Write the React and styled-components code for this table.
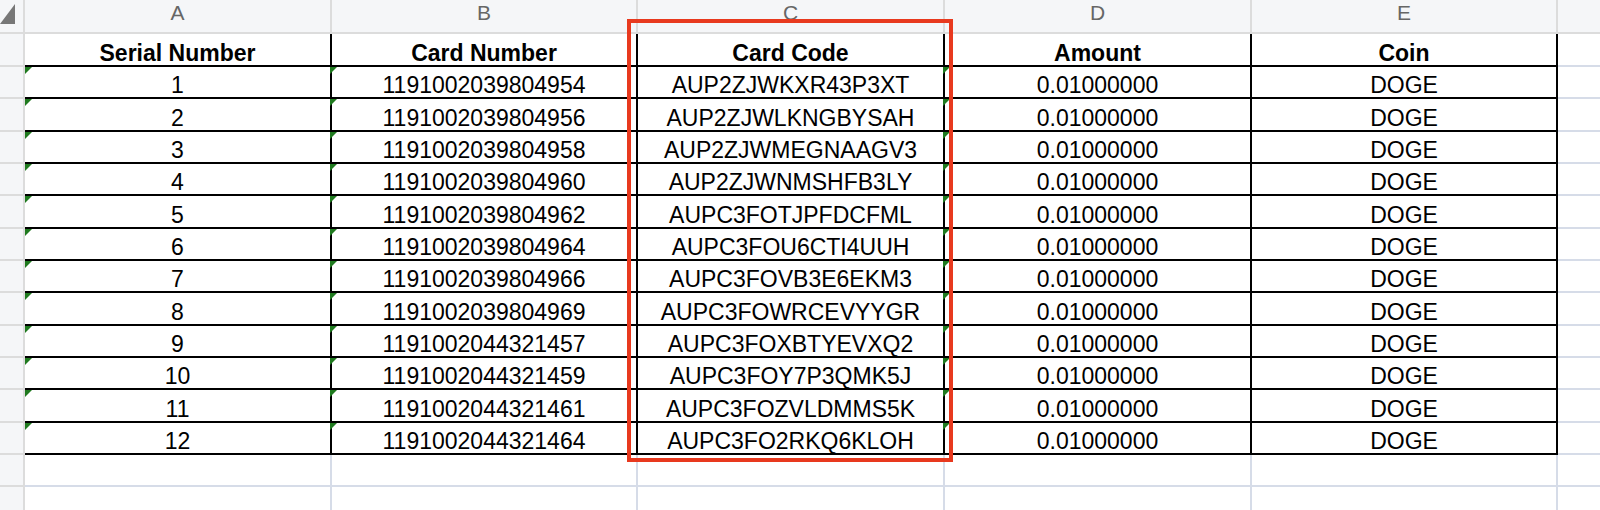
import styled, { createGlobalStyle } from "styled-components";

const GlobalStyle = createGlobalStyle`
  html, body {
    margin: 0;
    padding: 0;
    background: #ffffff;
    overflow: hidden;
  }
  body {
    font-family: "Liberation Sans", Arial, sans-serif;
  }
`;

const colors = {
  ink: "#000000",
  grid: "#d6dce8",
  headBg: "#f5f6f8",
  headLine: "#dcdcdc",
  letter: "#666666",
  flag: "#1f7a1f",
  mark: "#e8391e",
};

// widths of columns A..E, in px (the border is inside)
const COLS = [307, 306, 307, 307, 306];
const LETTERS = ["A", "B", "C", "D", "E"];
// which columns hold "number stored as text" flags
const FLAGGED = [true, true, false, true, false];

const ROWS = [
  ["1", "1191002039804954", "AUP2ZJWKXR43P3XT"],
  ["2", "1191002039804956", "AUP2ZJWLKNGBYSAH"],
  ["3", "1191002039804958", "AUP2ZJWMEGNAAGV3"],
  ["4", "1191002039804960", "AUP2ZJWNMSHFB3LY"],
  ["5", "1191002039804962", "AUPC3FOTJPFDCFML"],
  ["6", "1191002039804964", "AUPC3FOU6CTI4UUH"],
  ["7", "1191002039804966", "AUPC3FOVB3E6EKM3"],
  ["8", "1191002039804969", "AUPC3FOWRCEVYYGR"],
  ["9", "1191002044321457", "AUPC3FOXBTYEVXQ2"],
  ["10", "1191002044321459", "AUPC3FOY7P3QMK5J"],
  ["11", "1191002044321461", "AUPC3FOZVLDMMS5K"],
  ["12", "1191002044321464", "AUPC3FO2RKQ6KLOH"],
];

// row lines sit on a 32.33px pitch in the screenshot
const lineTop = (i) => Math.round(65 + i * 32.33);
const rowHeight = (i) => lineTop(i) - lineTop(i - 1);

const Sheet = styled.div`
  position: relative;
  display: flex;
  flex-direction: column;
  width: 100vw;
  height: 100vh;
  overflow: hidden;
  background: #fff;
`;

const ColumnBar = styled.div`
  display: flex;
  flex: none;
  height: 34px;
  box-sizing: border-box;
  background: ${colors.headBg};
  border-bottom: 2px solid ${colors.headLine};
`;

const Corner = styled.div`
  flex: none;
  width: 25px;
  box-sizing: border-box;
  border-right: 2px solid ${colors.headLine};
  padding-top: 4px;
  display: flex;
  align-items: flex-start;
`;

const Letter = styled.div`
  flex: none;
  width: ${({ $w }) => $w}px;
  box-sizing: border-box;
  border-right: 2px solid ${colors.headLine};
  display: flex;
  justify-content: center;
  align-items: flex-start;
  padding-top: 1px;
  font-size: 21px;
  color: ${colors.letter};
`;

const Rest = styled.div`
  flex: 1;
  box-sizing: border-box;
  border-bottom: ${({ $line }) => ($line ? `2px solid ${colors.grid}` : "none")};
`;

const Row = styled.div`
  display: flex;
  flex: none;
  height: ${({ $h }) => $h}px;
`;

const RowHead = styled.div`
  flex: none;
  width: 25px;
  box-sizing: border-box;
  background: ${colors.headBg};
  border-right: 2px solid ${colors.headLine};
  border-bottom: 2px solid ${colors.headLine};
`;

const Cell = styled.div`
  position: relative;
  flex: none;
  width: ${({ $w }) => $w}px;
  box-sizing: border-box;
  border-right: 2px solid ${({ $ink }) => ($ink ? colors.ink : colors.grid)};
  border-bottom: 2px solid ${({ $ink }) => ($ink ? colors.ink : colors.grid)};
  display: flex;
  justify-content: center;
  align-items: flex-end;
  font-size: 23px;
  line-height: 24px;
  font-weight: ${({ $bold }) => ($bold ? 700 : 400)};
  color: #000;
  white-space: nowrap;

  ${({ $flag }) =>
    $flag &&
    `
    &::before {
      content: "";
      position: absolute;
      top: 0;
      left: ${$flag === "edge" ? 0 : -2}px;
      width: 0;
      height: 0;
      border-top: 7px solid ${colors.flag};
      border-right: 7px solid transparent;
      z-index: 1;
    }
  `}
`;

const Highlight = styled.div`
  position: absolute;
  left: 627px;
  top: 19px;
  width: 326px;
  height: 443px;
  box-sizing: border-box;
  border: 4px solid ${colors.mark};
  pointer-events: none;
  z-index: 2;
`;

const CornerMark = () => (
  <svg width="15" height="20" viewBox="0 0 15 20">
    <polygon points="15,0 15,20 0,20" fill="#777777" />
  </svg>
);

const TableRow = ({ h, cells, bold, flags }) => (
  <Row $h={h}>
    <RowHead />
    {COLS.map((w, i) => (
      <Cell
        key={i}
        $w={w}
        $ink
        $bold={bold}
        $flag={flags && FLAGGED[i] ? (i === 0 ? "edge" : "over") : null}
      >
        {cells[i]}
      </Cell>
    ))}
    <Rest $line />
  </Row>
);

const BlankRow = ({ h }) => (
  <Row $h={h}>
    <RowHead />
    {COLS.map((w, i) => (
      <Cell key={i} $w={w} />
    ))}
    <Rest $line />
  </Row>
);

export default function App() {
  return (
    <>
      <GlobalStyle />
      <Sheet>
        <ColumnBar>
          <Corner>
            <CornerMark />
          </Corner>
          {COLS.map((w, i) => (
            <Letter key={i} $w={w}>
              {LETTERS[i]}
            </Letter>
          ))}
          <Rest />
        </ColumnBar>

        <TableRow
          h={33}
          bold
          cells={["Serial Number", "Card Number", "Card Code", "Amount", "Coin"]}
        />
        {ROWS.map((r, i) => (
          <TableRow
            key={r[0]}
            h={rowHeight(i + 1)}
            flags
            cells={[r[0], r[1], r[2], "0.01000000", "DOGE"]}
          />
        ))}
        <BlankRow h={rowHeight(13)} />
        <BlankRow h={rowHeight(14)} />

        <Highlight />
      </Sheet>
    </>
  );
}
